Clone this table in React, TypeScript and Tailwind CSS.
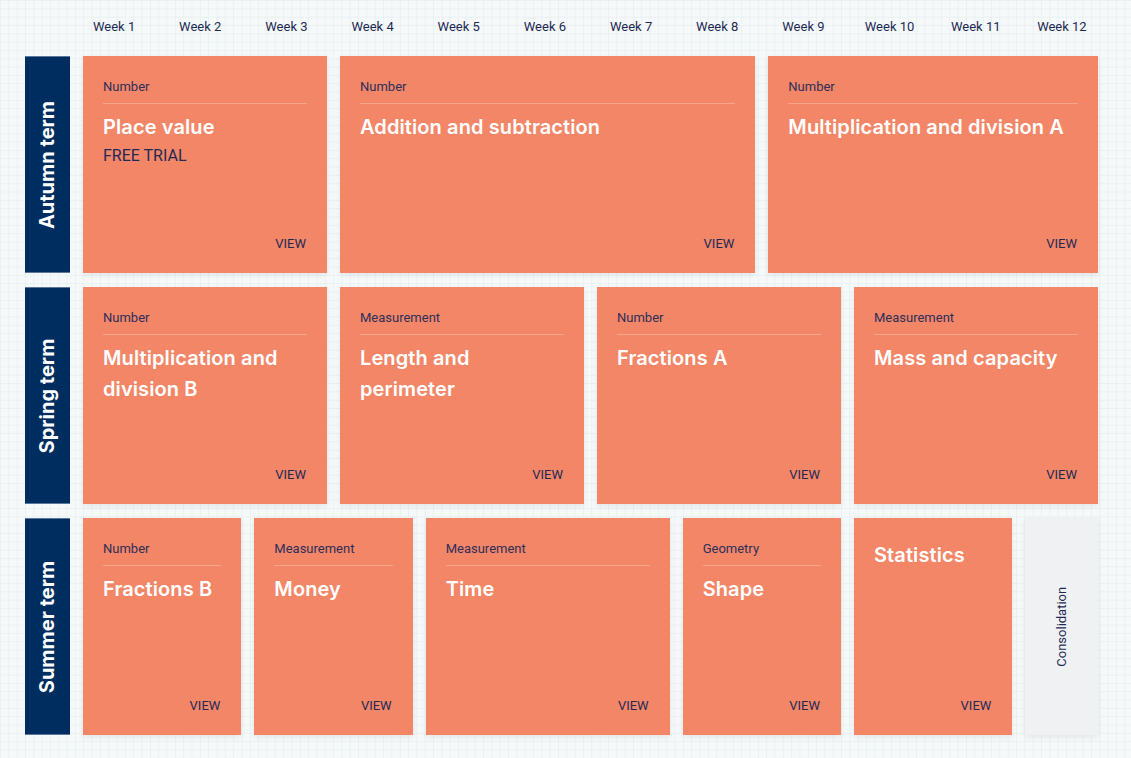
const weeks = Array.from({ length: 12 }, (_, i) => `Week ${i + 1}`);

type Unit = { span: string; category?: string; title: string; extra?: string };

const terms: { name: string; units: Unit[]; consolidation?: boolean }[] = [
  {
    name: "Autumn term",
    units: [
      { span: "col-span-3", category: "Number", title: "Place value", extra: "FREE TRIAL" },
      { span: "col-span-5", category: "Number", title: "Addition and subtraction" },
      { span: "col-span-4", category: "Number", title: "Multiplication and division A" },
    ],
  },
  {
    name: "Spring term",
    units: [
      { span: "col-span-3", category: "Number", title: "Multiplication and division B" },
      { span: "col-span-3", category: "Measurement", title: "Length and perimeter" },
      { span: "col-span-3", category: "Number", title: "Fractions A" },
      { span: "col-span-3", category: "Measurement", title: "Mass and capacity" },
    ],
  },
  {
    name: "Summer term",
    consolidation: true,
    units: [
      { span: "col-span-2", category: "Number", title: "Fractions B" },
      { span: "col-span-2", category: "Measurement", title: "Money" },
      { span: "col-span-3", category: "Measurement", title: "Time" },
      { span: "col-span-2", category: "Geometry", title: "Shape" },
      { span: "col-span-2", title: "Statistics" },
    ],
  },
];

function UnitCard({ unit }: { unit: Unit }) {
  return (
    <div className={`${unit.span} relative flex flex-col bg-[#f28667] px-5 pt-[23px] shadow-[0_2px_6px_rgba(0,0,0,0.08)]`}>
      {unit.category && (
        <>
          <div className="font-['Roboto',sans-serif] text-[13px] leading-4 text-[#2d2f5a]">{unit.category}</div>
          <div className="mt-[8px] h-px bg-[#f6a58c]" />
        </>
      )}
      <h3
        className={`${unit.category ? "mt-[8px]" : "mt-[-1px]"} font-['Inter',sans-serif] text-[20px] font-semibold leading-[31px] tracking-[0.1px] text-white`}
      >
        {unit.title}
      </h3>
      {unit.extra && (
        <div className="mt-[3px] font-['Roboto',sans-serif] text-[16px] leading-5 text-[#1e2a55]">{unit.extra}</div>
      )}
      <span className="absolute bottom-[21px] right-[21px] font-['Roboto',sans-serif] text-[13px] leading-4 text-[#1e2a55]">
        VIEW
      </span>
    </div>
  );
}

export default function App() {
  return (
    <div className="min-h-[758px] w-full bg-[#f6f9fa] bg-[linear-gradient(to_right,#e9f1f2_1px,transparent_1px),linear-gradient(to_bottom,#e9f1f2_1px,transparent_1px)] bg-[size:8.33px_8.33px] pb-[22px] font-['Roboto',sans-serif]">
      <div className="ml-[71px] grid h-[56px] w-[1034px] grid-cols-12 items-center pb-[2px]">
        {weeks.map((w) => (
          <div key={w} className="text-center text-[13px] text-[#1e2a55]">
            {w}
          </div>
        ))}
      </div>

      <div className="flex flex-col gap-[14px] pl-[25px] pr-[33px]">
        {terms.map((term) => (
          <div key={term.name} className="flex h-[217px] gap-[13px]">
            <div className="flex w-[45px] shrink-0 items-center justify-center border-y border-[#5b7699] bg-[#002d5f]">
              <span className="-rotate-90 whitespace-nowrap font-['Inter',sans-serif] text-[20px] font-bold text-white">
                {term.name}
              </span>
            </div>
            <div className="grid flex-1 grid-cols-12 gap-[13px]">
              {term.units.map((u) => (
                <UnitCard key={u.title} unit={u} />
              ))}
              {term.consolidation && (
                <div className="col-span-1 flex items-center justify-center bg-[#f0f1f3] shadow-[0_2px_6px_rgba(0,0,0,0.08)]">
                  <span className="-rotate-90 whitespace-nowrap text-[13px] text-[#1e2a55]">Consolidation</span>
                </div>
              )}
            </div>
          </div>
        ))}
      </div>
    </div>
  );
}
